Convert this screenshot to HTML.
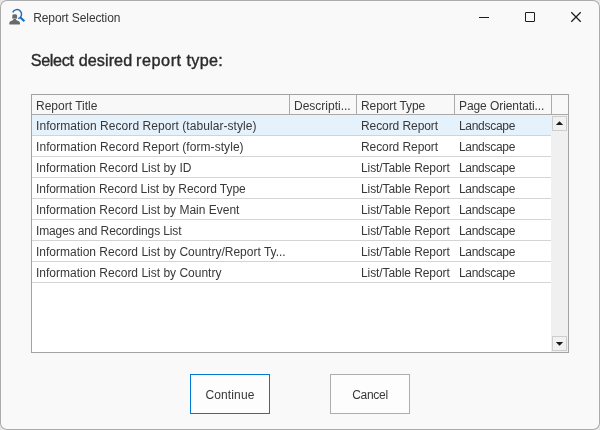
<!DOCTYPE html>
<html>
<head>
<meta charset="utf-8">
<title>Report Selection</title>
<style>
html,body{margin:0;padding:0;}
body{width:600px;height:430px;overflow:hidden;background:#e6e6e6;font-family:"Liberation Sans",sans-serif;color:#383838;position:relative;}
#win{position:absolute;left:0;top:0;width:600px;height:430px;border-radius:7px;background:#f9f9f9;overflow:hidden;box-shadow:inset 0 0 0 1px #ababab;will-change:transform;}
.abs{position:absolute;white-space:nowrap;}
#title{left:33.2px;top:11px;font-size:12px;line-height:15px;color:#383838;letter-spacing:-0.1px;}
#head{left:0;top:50.5px;font-size:16.2px;line-height:18px;color:#2b2b2b;-webkit-text-stroke:0.38px #2b2b2b;}
#head span{position:absolute;top:0;}
#list{position:absolute;left:31px;top:94px;width:536px;height:257px;border:1px solid #a3a3a3;background:#fff;}
.hdr{position:absolute;left:0;top:0;height:19px;width:536px;background:#f8f8f8;border-bottom:1px solid #a9a9a9;}
.hc{position:absolute;top:0;height:19px;border-right:1px solid #ababab;font-size:12px;line-height:23px;padding-left:4px;box-sizing:border-box;overflow:hidden;white-space:nowrap;}
.row{position:absolute;left:0;width:519px;height:20px;border-bottom:1px solid #d4d4d4;font-size:12px;line-height:22px;}
.row span{position:absolute;top:0;white-space:nowrap;}
.sel{background:#e5f1fb;}
.c1{left:4px}.c3{left:329px;letter-spacing:-0.08px}.c4{left:427px;letter-spacing:-0.3px}
#sb{position:absolute;left:519px;top:20px;width:17px;height:237px;background:#f0f0f0;}
.sbb{position:absolute;left:1px;width:13px;height:13px;border:1px solid #cdcdcd;background:#f1f1f1;}
.btn{position:absolute;top:374px;width:78px;height:38px;border:1px solid #adadad;background:#fdfdfd;font-size:12px;line-height:41px;text-align:center;}
svg{position:absolute;overflow:visible;}
</style>
</head>
<body>
<div id="win">
<svg id="icon" style="left:0;top:0" width="32" height="32" viewBox="0 0 32 32">
 <path d="M12.77 12.4 A4.6 4.6 0 1 1 18.19 18.64" fill="none" stroke="#1e6bbd" stroke-width="1.45"/>
 <path d="M20.4 17.4 L24.4 21.3" stroke="#1e6dc0" stroke-width="2.1" fill="none"/>
 <g fill="#6a6a6a" stroke="#fbfbfb" stroke-width="0.8" paint-order="stroke">
  <rect x="12.3" y="14.2" width="4.8" height="5.2" rx="1.6"/>
  <path d="M9.3 23.2 C9.3 21.5 11 21 13.3 20 L13.3 18.5 L16.1 18.5 L16.1 20 C18.3 21 20 21.5 20 23.2 L20 24 Q20 24.6 19.3 24.6 L10 24.6 Q9.3 24.6 9.3 24 Z"/>
 </g>
</svg>
<div class="abs" id="title">Report Selection</div>
<svg style="left:0;top:0" width="600" height="32" viewBox="0 0 600 32">
 <rect x="479" y="17" width="10" height="1" fill="#1c1c1c"/>
 <rect x="525.5" y="12.5" width="9" height="9" rx="0.3" fill="none" stroke="#1c1c1c" stroke-width="1"/>
 <path d="M571.3 12.3 L580.7 21.7 M580.7 12.3 L571.3 21.7" stroke="#1c1c1c" stroke-width="1.25" fill="none"/>
</svg>
<div class="abs" id="head"><span style="left:30.75px;letter-spacing:-0.35px">Select</span><span style="left:78.78px;letter-spacing:0.05px">desired</span><span style="left:136.09px;letter-spacing:0.55px">report</span><span style="left:186.51px;letter-spacing:0.3px">type:</span></div>
<div id="list">
 <div class="hdr">
  <div class="hc" style="left:0;width:258px">Report Title</div>
  <div class="hc" style="left:258px;width:67px">Descripti...</div>
  <div class="hc" style="left:325px;width:98px;letter-spacing:-0.09px">Report Type</div>
  <div class="hc" style="left:423px;width:97px;letter-spacing:-0.08px">Page Orientati...</div>
 </div>
 <div class="row sel" style="top:20px"><span class="c1" style="letter-spacing:0.06px">Information Record Report (tabular-style)</span><span class="c3">Record Report</span><span class="c4">Landscape</span></div>
 <div class="row" style="top:41px"><span class="c1" style="letter-spacing:0.06px">Information Record Report (form-style)</span><span class="c3">Record Report</span><span class="c4">Landscape</span></div>
 <div class="row" style="top:62px"><span class="c1">Information Record List by ID</span><span class="c3">List/Table Report</span><span class="c4">Landscape</span></div>
 <div class="row" style="top:83px"><span class="c1" style="letter-spacing:-0.04px">Information Record List by Record Type</span><span class="c3">List/Table Report</span><span class="c4">Landscape</span></div>
 <div class="row" style="top:104px"><span class="c1">Information Record List by Main Event</span><span class="c3">List/Table Report</span><span class="c4">Landscape</span></div>
 <div class="row" style="top:125px"><span class="c1" style="letter-spacing:-0.13px">Images and Recordings List</span><span class="c3">List/Table Report</span><span class="c4">Landscape</span></div>
 <div class="row" style="top:146px"><span class="c1">Information Record List by Country/Report Ty...</span><span class="c3">List/Table Report</span><span class="c4">Landscape</span></div>
 <div class="row" style="top:167px"><span class="c1">Information Record List by Country</span><span class="c3">List/Table Report</span><span class="c4">Landscape</span></div>
 <div id="sb">
  <div class="sbb" style="top:1px"></div>
  <div class="sbb" style="top:221px"></div>
  <svg style="left:0;top:0" width="17" height="237" viewBox="0 0 17 237">
   <path d="M4.8 10 L8.5 6.2 L12.2 10 Z" fill="#1a1a1a"/>
   <path d="M4.8 227 L12.2 227 L8.5 230.8 Z" fill="#1a1a1a"/>
  </svg>
 </div>
</div>
<div class="btn" style="left:190px;border-color:#0078d4;letter-spacing:0.12px">Continue</div>
<div class="btn" style="left:330px;letter-spacing:-0.3px">Cancel</div>
</div>
</body>
</html>
